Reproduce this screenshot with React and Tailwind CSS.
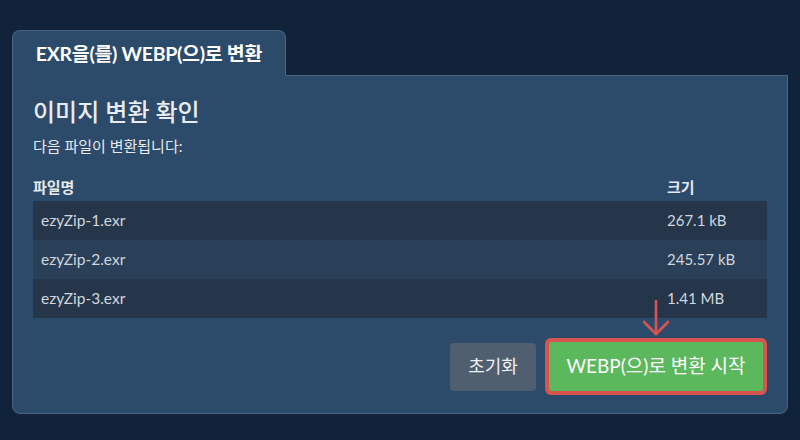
const files = [
  { name: "ezyZip-1.exr", size: "267.1 kB" },
  { name: "ezyZip-2.exr", size: "245.57 kB" },
  { name: "ezyZip-3.exr", size: "1.41 MB" },
];

function DownArrow() {
  return (
    <svg
      className="absolute left-[-25px] top-[21px]"
      width="28"
      height="36"
      viewBox="0 0 28 36"
      fill="none"
      stroke="#d9534f"
      strokeWidth="2.6"
      strokeLinecap="round"
      strokeLinejoin="round"
    >
      <path d="M14 1v33" />
      <path d="M2 22l12 12 12-12" />
    </svg>
  );
}

export default function App() {
  return (
    <div
      className="h-[440px] w-[800px] bg-[#11233a] pt-[30px] px-3 text-[#e6e9ee]"
      style={{ fontFamily: "Lato, 'Noto Sans CJK KR', sans-serif" }}
    >
      {/* tab */}
      <div className="flex">
        <div className="relative z-10 -mb-px w-[274px] h-[46px] rounded-t-lg border border-b-0 border-[#4a6480] bg-[#2c4a6a] flex items-center justify-center">
          <span className="text-[19.5px] font-bold text-white tracking-[-0.3px]">EXR을(를) WEBP(으)로 변환</span>
        </div>
      </div>

      {/* panel */}
      <div className="h-[339px] rounded-b-lg rounded-tr-none border border-[#4a6480] bg-[#2c4a6a] px-5 pt-[20px]">
        <h2 className="text-[24px] leading-8 font-medium text-[#e8ebef]">이미지 변환 확인</h2>
        <p className="mt-[8px] text-[15px] leading-5">다음 파일이 변환됩니다:</p>

        <table className="mt-[17px] w-full text-[15px]">
          <thead>
            <tr className="h-[28px] text-left">
              <th className="font-bold">파일명</th>
              <th className="w-[100px] font-bold">크기</th>
            </tr>
          </thead>
          <tbody>
            {files.map((f, i) => (
              <tr
                key={f.name}
                className={`h-[39px] ${i % 2 === 1 ? "bg-[#2a4058]" : "bg-[#25364b]"} text-[#d0d6de]`}
              >
                <td className="pl-2 text-[15.5px]">{f.name}</td>
                <td className="relative">
                  {f.size}
                  {i === 2 && <DownArrow />}
                </td>
              </tr>
            ))}
          </tbody>
        </table>

        <div className="mt-[20px] flex justify-end items-center gap-[9px]">
          <button className="h-[48px] w-[86px] rounded bg-[#4f5f70] text-[18px] text-[#eef0f3]">
            초기화
          </button>
          <button className="h-[57px] w-[222px] rounded-md border-[4px] border-[#d9534f] bg-[#5cb85c] text-[19px] text-white">
            WEBP(으)로 변환 시작
          </button>
        </div>
      </div>
    </div>
  );
}
